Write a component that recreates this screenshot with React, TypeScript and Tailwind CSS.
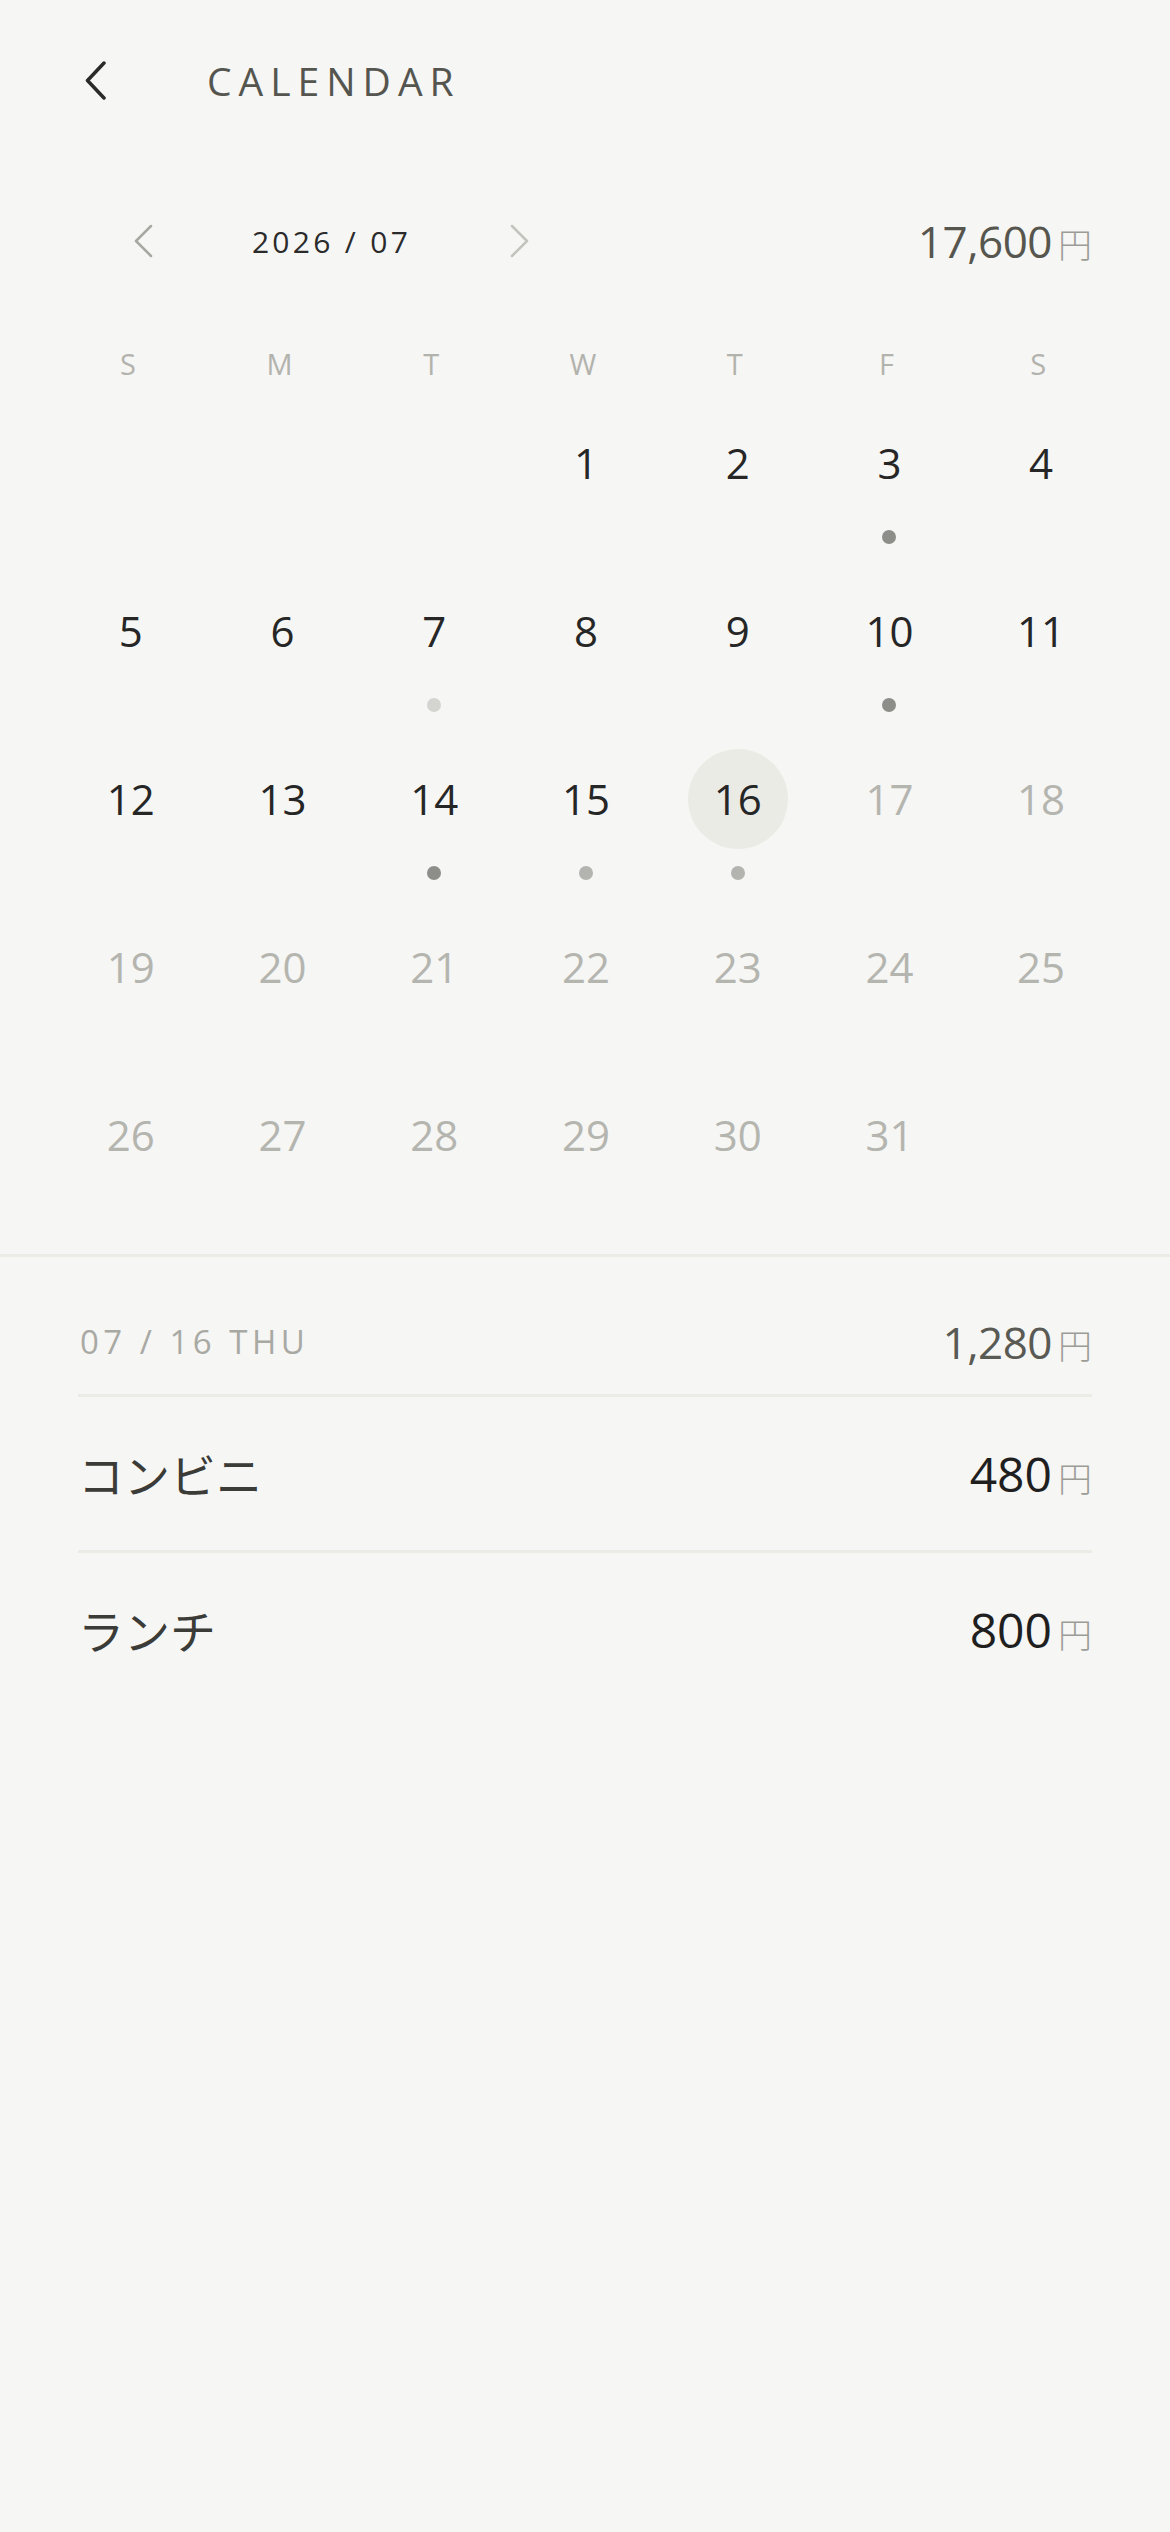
import clsx from 'clsx'

type Dot = 'dark' | 'mid' | 'light'

const weekdays = ['S', 'M', 'T', 'W', 'T', 'F', 'S']

// July 2026 starts on a Wednesday
const days: (number | null)[] = [null, null, null, ...Array.from({ length: 31 }, (_, i) => i + 1)]

const dots: Record<number, Dot> = { 3: 'dark', 7: 'light', 10: 'dark', 14: 'dark', 15: 'mid', 16: 'mid' }

const dotColor: Record<Dot, string> = {
    dark: 'bg-[#8d8d8a]',
    mid: 'bg-[#b3b3b0]',
    light: 'bg-[#d4d4d1]'
}

const today = 16

const items = [
    { name: 'コンビニ', amount: '480' },
    { name: 'ランチ', amount: '800' }
]

function Yen({ value, className }: { value: string; className: string }) {
    return (
        <div className="flex items-baseline">
            <span className={className}>{value}</span>
            <span className="ml-[6px] text-[34px] font-light text-[#9c9c97]">円</span>
        </div>
    )
}

function Chevron({ dir, className }: { dir: 'left' | 'right'; className: string }) {
    return (
        <svg width="19" height="34" viewBox="0 0 19 34" fill="none" className={className}>
            <path
                d={dir === 'left' ? 'M17 2 L2 17 L17 32' : 'M2 2 L17 17 L2 32'}
                stroke="currentColor"
                strokeWidth="2.5"
                strokeLinecap="round"
                strokeLinejoin="round"
            />
        </svg>
    )
}

function DayCell({ day }: { day: number | null }) {
    if (day === null) return <div className="h-[168px]" />
    const dot = dots[day]
    return (
        <div className="flex h-[168px] flex-col items-center">
            <div
                className={clsx(
                    'flex size-[100px] items-center justify-center rounded-full text-[42px] leading-none',
                    day === today && 'bg-[#ebebe6]',
                    day > today ? 'text-[#b5b5b0]' : 'text-[#262626]'
                )}
            >
                {day}
            </div>
            {dot && <span className={clsx('mt-[17px] size-[14px] rounded-full', dotColor[dot])} />}
        </div>
    )
}

export default function App() {
    return (
        <div className="min-h-screen w-full bg-[#f6f6f4] font-['Open_Sans','Noto_Sans_CJK_JP',sans-serif]">
            <header className="flex h-[160px] items-center pl-[85px]">
                <svg width="21" height="39" viewBox="0 0 21 39" fill="none" className="text-[#2a2a2a]">
                    <path d="M19 2 L2.5 19.5 L19 37" stroke="currentColor" strokeWidth="3.5" strokeLinecap="round" strokeLinejoin="round" />
                </svg>
                <h1 className="ml-[101px] text-[39px] leading-none tracking-[7px] text-[#555550]">CALENDAR</h1>
            </header>

            <div className="mt-[31px] flex h-[100px] items-center justify-between pl-[134px] pr-[78px]">
                <div className="flex items-center">
                    <Chevron dir="left" className="text-[#a8a8a3]" />
                    <span className="w-[357px] text-center text-[30px] tracking-[3.3px] text-[#2b2b2b]">2026 / 07</span>
                    <Chevron dir="right" className="text-[#c4c4bf]" />
                </div>
                <Yen value="17,600" className="text-[44px] tracking-[-0.5px] text-[#56564f]" />
            </div>

            <div className="mt-[44px] ml-[52px] mr-[56px] grid h-[58px] grid-cols-7 items-center">
                {weekdays.map((d, i) => (
                    <span key={i} className="text-center text-[29px] text-[#b3b3ae]">
                        {d}
                    </span>
                ))}
            </div>

            <div className="mt-[20px] ml-[55px] mr-[53px] grid grid-cols-7">
                {days.map((d, i) => (
                    <DayCell key={i} day={d} />
                ))}
            </div>

            <div className="mt-[1px] h-[3px] w-full bg-[#ecece7]" />

            <section className="px-[78px]">
                <div className="flex h-[137px] items-center justify-between pt-[32px]">
                    <span className="pl-[2px] text-[33px] tracking-[4.5px] text-[#a9a9a4]">07 / 16 THU</span>
                    <Yen value="1,280" className="text-[44px] tracking-[-0.5px] text-[#5a5a54]" />
                </div>
                {items.map((item) => (
                    <div key={item.name}>
                        <div className="h-[3px] bg-[#ecece7]" />
                        <div className="flex h-[153px] items-center justify-between">
                            <span className="font-['Noto_Sans_CJK_JP',sans-serif] text-[46px] text-[#3b3b38]">{item.name}</span>
                            <Yen value={item.amount} className="text-[48px] text-[#1f1f1f]" />
                        </div>
                    </div>
                ))}
            </section>
        </div>
    )
}
